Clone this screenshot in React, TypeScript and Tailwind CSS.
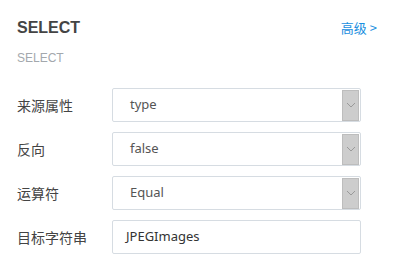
const rows = [
  { label: '来源属性', value: 'type', select: true },
  { label: '反向', value: 'false', select: true },
  { label: '运算符', value: 'Equal', select: true },
  { label: '目标字符串', value: 'JPEGImages', select: false },
];

function Chevron() {
  return (
    <svg width="10" height="6" viewBox="0 0 10 6" fill="none">
      <path d="M1 1l4 4 4-4" stroke="#9a9a9a" strokeWidth="1" />
    </svg>
  );
}

export default function App() {
  return (
    <div className="h-[264px] w-[394px] bg-white px-[17px] pt-[18px] font-['Noto_Sans','Noto_Sans_CJK_SC',sans-serif]">
      <div className="flex items-center justify-between">
        <h2 className="font-['Liberation_Sans',sans-serif] text-[16px] font-bold leading-[20px] text-[#444]">
          SELECT
        </h2>
        <a className="text-[13px] leading-[20px] text-[#1a8fe0] font-['Noto_Sans_CJK_SC',sans-serif]">高级 &gt;</a>
      </div>
      <p className="mt-[12px] font-['Liberation_Sans',sans-serif] text-[12px] leading-[16px] text-[#a3a8ad]">SELECT</p>

      <div className="mt-[22px] flex flex-col gap-[10px]">
        {rows.map((r) => (
          <div key={r.label} className="flex items-center">
            <label className="w-[95px] font-['Noto_Sans_CJK_SC',sans-serif] text-[14px] text-[#444]">
              {r.label}
            </label>
            <div className="flex h-[34px] w-[249px] items-center rounded-[2px] border border-[#d6dce2] bg-white">
              <span
                className={
                  r.select
                    ? 'flex-1 pl-[17px] text-[13px] text-[#555]'
                    : 'flex-1 pl-[13px] text-[13px] text-[#333]'
                }
              >
                {r.value}
              </span>
              {r.select && (
                <div className="mr-[1px] flex h-[31px] w-[17px] items-center justify-center border border-[#bdbdbd] bg-[#cdcdcd]">
                  <Chevron />
                </div>
              )}
            </div>
          </div>
        ))}
      </div>
    </div>
  );
}
